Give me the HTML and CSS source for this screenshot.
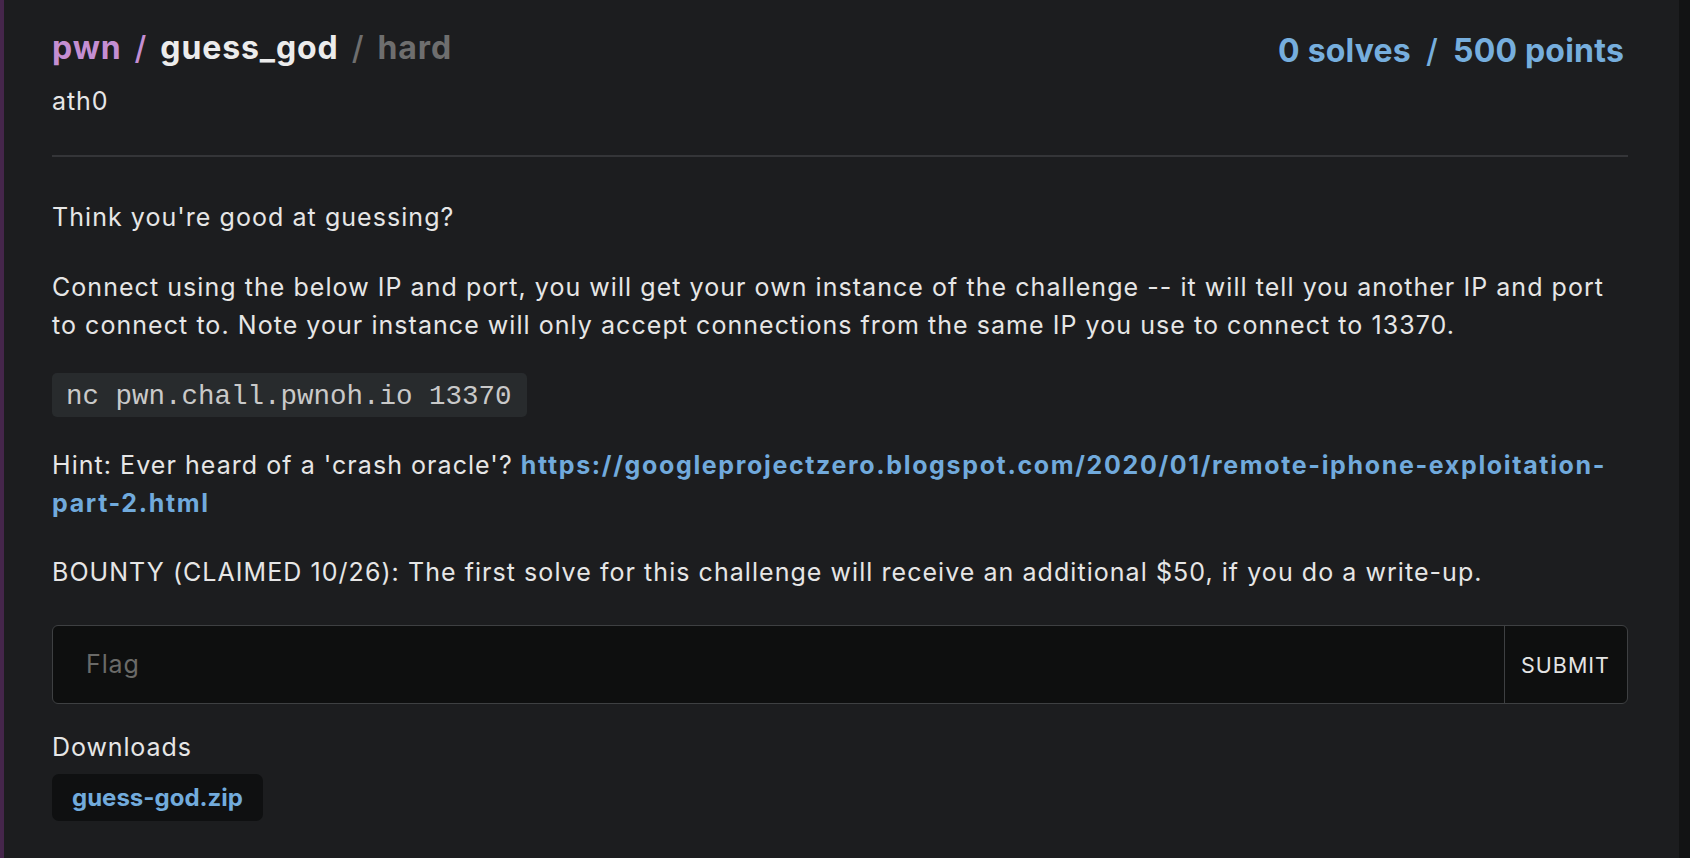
FILE: index.html
```html
<!DOCTYPE html>
<html lang="en">
<head>
<meta charset="utf-8">
<title>pwn / guess_god</title>
<link rel="stylesheet" href="styles.css">
</head>
<body>
<main class="card">
  <header class="head">
    <div class="head-left">
      <h1 class="title">
        <span class="cat">pwn</span>
        <span class="sep cat">/</span>
        <span class="name">guess_god</span>
        <span class="sep dim">/</span>
        <span class="dim">hard</span>
      </h1>
      <div class="author">ath0</div>
    </div>
    <div class="score">
      <span>0 solves</span>
      <span class="sep">/</span>
      <span>500 points</span>
    </div>
  </header>
  <hr class="rule">
  <section class="desc">
    <p class="para">Think you're good at guessing?</p>
    <p class="para">Connect using the below IP and port, you will get your own instance of the challenge -- it will tell you another IP and port to connect to. Note your instance will only accept connections from the same IP you use to connect to 13370.</p>
    <div class="code-row"><code class="code">nc pwn.chall.pwnoh.io 13370</code></div>
    <p class="para">Hint: Ever heard of a 'crash oracle'? <a class="link" href="#">https://googleprojectzero.blogspot.com/2020/01/remote-iphone-exploitation-part-2.html</a></p>
    <p class="para">BOUNTY (CLAIMED 10/26): The first solve for this challenge will receive an additional $50, if you do a write-up.</p>
  </section>
  <form class="flag-form">
    <input class="flag-input" type="text" placeholder="Flag">
    <button class="submit" type="button">Submit</button>
  </form>
  <div class="downloads">
    <div class="dl-label">Downloads</div>
    <a class="dl-btn" href="#">guess-god.zip</a>
  </div>
</main>
</body>
</html>
```
FILE: styles.css
```css
html, body {
  margin: 0;
  padding: 0;
}
body {
  background: #121314;
  font-family: Inter, "Noto Sans", sans-serif;
  color: #e6e6e6;
  overflow: hidden;
}
.card {
  box-sizing: border-box;
  width: 1679px;
  min-height: 100vh;
  background: #1c1d1f;
  border-left: 4px solid #45264b;
  padding: 28px 51px 20px 48px;
}
.head {
  display: flex;
  justify-content: space-between;
  align-items: flex-start;
}
.title {
  margin: 0;
  display: flex;
  gap: 13px;
  font-size: 32px;
  line-height: 40px;
  font-weight: 700;
  letter-spacing: 0.9px;
}
.cat { color: #c48ed2; }
.name { color: #ececec; }
.dim { color: #6e6e6e; }
.sep { font-weight: 500; }
.author {
  margin-top: 14px;
  font-size: 25px;
  line-height: 38.4px;
  letter-spacing: 0.9px;
  color: #e6e6e6;
}
.score {
  display: flex;
  gap: 15px;
  margin: 3px 4px 0 0;
  font-size: 32px;
  line-height: 40px;
  font-weight: 700;
  letter-spacing: 0.2px;
  color: #76aedd;
}
.score .sep { font-weight: 500; }
.rule {
  margin: 35px 0 0;
  border: 0;
  height: 2px;
  background: #343538;
}
.desc {
  margin-top: 41px;
  font-size: 25px;
  line-height: 38.4px;
  letter-spacing: 1.05px;
}
.para {
  margin: 0 0 31px;
}
.link {
  color: #71aadc;
  font-weight: 700;
  letter-spacing: 1.65px;
  text-decoration: none;
}
.code-row {
  display: flex;
  margin: -3px 0 29px;
}
.code {
  display: block;
  box-sizing: border-box;
  height: 44px;
  padding: 7px 15px 0 14px;
  background: #282b2d;
  border-radius: 5px;
  font-family: "Liberation Mono", monospace;
  font-size: 27.5px;
  line-height: 33px;
  letter-spacing: 0;
  color: #c9c9c9;
}
.flag-form {
  display: flex;
  margin-top: 33px;
  height: 79px;
  box-sizing: border-box;
  border: 1.5px solid #3e4042;
  border-radius: 6px;
  background: #0e0f0f;
  overflow: hidden;
}
.flag-input {
  flex: 1;
  min-width: 0;
  border: 0;
  outline: none;
  background: transparent;
  padding: 0 0 0 33px;
  font-family: Inter, "Noto Sans", sans-serif;
  font-size: 25px;
  letter-spacing: 0.9px;
  color: #e6e6e6;
}
.flag-input::placeholder { color: #6a6a68; }
.submit {
  border: 0;
  border-left: 1.5px solid #3e4042;
  background: transparent;
  padding: 2px 17px 0 16px;
  font-family: Inter, "Noto Sans", sans-serif;
  font-size: 21.5px;
  letter-spacing: 1px;
  text-transform: uppercase;
  color: #e4e4e4;
}
.downloads {
  margin-top: 24px;
}
.dl-label {
  font-size: 25px;
  line-height: 38.4px;
  letter-spacing: 0.9px;
}
.dl-btn {
  display: inline-block;
  margin-top: 8px;
  height: 47px;
  padding: 0 20px;
  border-radius: 7px;
  background: #0f1011;
  color: #72abdc;
  font-size: 24px;
  line-height: 47px;
  font-weight: 700;
  text-decoration: none;
}
```
